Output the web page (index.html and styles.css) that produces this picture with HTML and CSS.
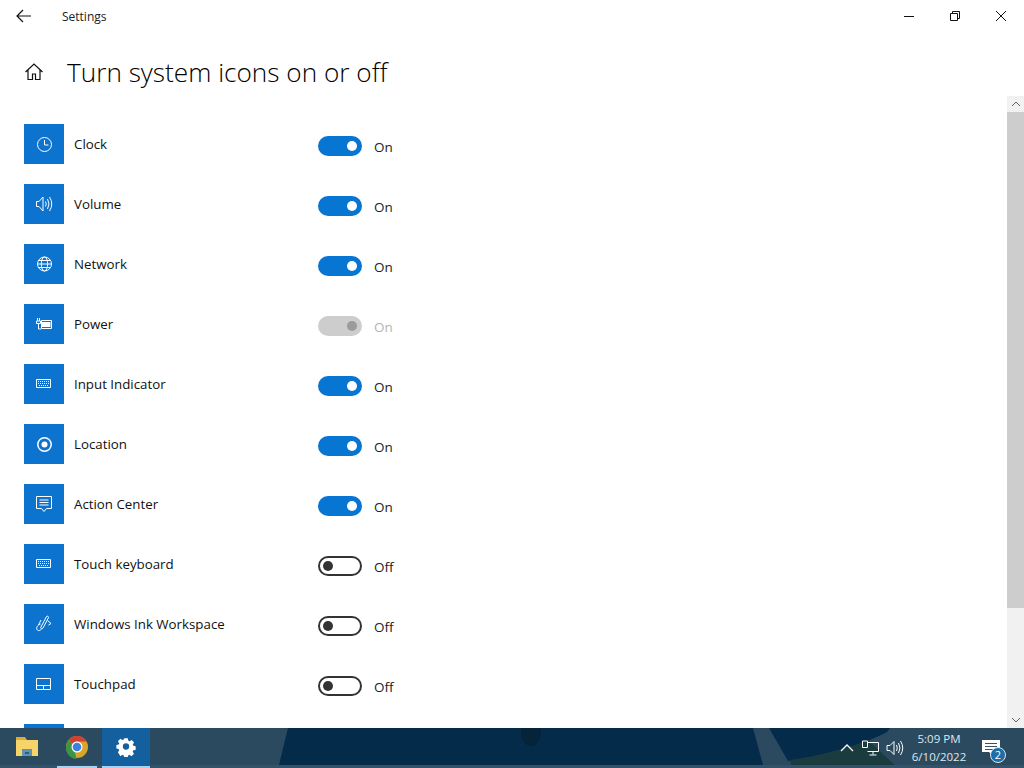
FILE: index.html
```html
<!DOCTYPE html>
<html lang="en">
<head>
<meta charset="utf-8">
<title>Settings</title>
<link rel="stylesheet" href="styles.css">
</head>
<body>
<div class="window">
  <header class="titlebar">
    <svg class="back" width="16" height="14" viewBox="0 0 16 14"><path d="M7 1 1 7l6 6M1 7h14"/></svg>
    <span class="app-name">Settings</span>
    <div class="win-controls">
      <svg width="10" height="10" viewBox="0 0 10 10"><path d="M0 5.500h10"/></svg>
      <svg width="10" height="10" viewBox="0 0 10 10"><path d="M.5 2.500h7v7h-7zM2.500 2.500v-2h7v7h-2"/></svg>
      <svg width="10" height="10" viewBox="0 0 10 10"><path d="M0 0l10 10M10 0 0 10"/></svg>
    </div>
  </header>
  <div class="page-head">
    <svg class="home" width="20" height="20" viewBox="0 0 20 20"><path d="M1.500 10 10 2l8.500 8M4 8v9.500h4.500v-5.500h3v5.500H16V8"/></svg>
    <h1>Turn system icons on or off</h1>
  </div>
  <div class="body">
    <main class="list">
      <div class="row">
        <span class="tile"><svg width="20" height="20" viewBox="0 0 20 20"><circle cx="10.500" cy="10.500" r="7"/><path d="M10.500 6v5h4"/></svg></span>
        <span class="label">Clock</span>
        <span class="switch on"><i></i></span><span class="state">On</span>
      </div>
      <div class="row">
        <span class="tile"><svg width="20" height="20" viewBox="0 0 20 20"><path d="M2.500 7.500h2.500l4-4.500v14l-4-4.500H2.500zM11.500 7.500q1.500 2.500 0 5M13.500 5q3 5 0 10M15.500 3q4.500 7 0 14"/></svg></span>
        <span class="label">Volume</span>
        <span class="switch on"><i></i></span><span class="state">On</span>
      </div>
      <div class="row">
        <span class="tile"><svg width="20" height="20" viewBox="0 0 20 20"><circle cx="10.500" cy="10" r="7"/><ellipse cx="10.500" cy="10" rx="3.200" ry="7"/><path d="M3.500 10h14M4.500 6.500h12M4.500 13.500h12"/></svg></span>
        <span class="label">Network</span>
        <span class="switch on"><i></i></span><span class="state">On</span>
      </div>
      <div class="row">
        <span class="tile"><svg width="20" height="20" viewBox="0 0 20 20"><path d="M3.500 4v3M5.500 4v3M2.500 7h4v2.500h-4zM4.500 9.500V15h2.500"/><path d="M7.500 6.500h10v8h-10z"/><path class="solid" d="M8 8h8.500v5H8z"/></svg></span>
        <span class="label">Power</span>
        <span class="switch disabled"><i></i></span><span class="state dim">On</span>
      </div>
      <div class="row">
        <span class="tile"><svg width="20" height="20" viewBox="0 0 20 20"><path d="M2.500 5.500h14v8h-14z"/><path class="dots" d="M4 7.500h11M4 9.500h11M5 11.500h9"/></svg></span>
        <span class="label">Input Indicator</span>
        <span class="switch on"><i></i></span><span class="state">On</span>
      </div>
      <div class="row">
        <span class="tile"><svg width="20" height="20" viewBox="0 0 20 20"><circle class="thick" cx="10.500" cy="10.500" r="6.700"/><circle class="fill" cx="10.500" cy="10.500" r="3"/></svg></span>
        <span class="label">Location</span>
        <span class="switch on"><i></i></span><span class="state">On</span>
      </div>
      <div class="row">
        <span class="tile"><svg width="20" height="20" viewBox="0 0 20 20"><path d="M2.500 2.500h15v12h-5l-2.500 3-2.500-3h-5zM5.500 6h9M5.500 8.500h9M5.500 11h9"/></svg></span>
        <span class="label">Action Center</span>
        <span class="switch on"><i></i></span><span class="state">On</span>
      </div>
      <div class="row">
        <span class="tile"><svg width="20" height="20" viewBox="0 0 20 20"><path d="M2.500 5.500h14v8h-14z"/><path class="dots" d="M4 7.500h11M4 9.500h11M5 11.500h9"/></svg></span>
        <span class="label">Touch keyboard</span>
        <span class="switch off"><i></i></span><span class="state">Off</span>
      </div>
      <div class="row">
        <span class="tile"><svg width="20" height="20" viewBox="0 0 20 20"><path d="M12.500 2.500c1-.8 2.300 0 2 1.200L9 14c-.8 1.200-2 .8-2.500-.2zM13.500 6.500l3.500 3-2.500 1.500M7 6l-2.500 5M6.500 10c-3 1-4.500 3.500-3.500 5.500s3.500 1 5-1"/></svg></span>
        <span class="label">Windows Ink Workspace</span>
        <span class="switch off"><i></i></span><span class="state">Off</span>
      </div>
      <div class="row">
        <span class="tile"><svg width="20" height="20" viewBox="0 0 20 20"><path d="M2.500 4.500h14v11h-14zM2.500 11.500h14M9.500 11.500v4"/></svg></span>
        <span class="label">Touchpad</span>
        <span class="switch off"><i></i></span><span class="state">Off</span>
      </div>
      <div class="row">
        <span class="tile"></span>
      </div>
    </main>
    <aside class="scrollbar">
      <span class="arrow"><svg width="10" height="6" viewBox="0 0 10 6"><path d="M1 5l4-4 4 4"/></svg></span>
      <span class="track"><span class="thumb"></span></span>
      <span class="arrow"><svg width="10" height="6" viewBox="0 0 10 6"><path d="M1 1l4 4 4-4"/></svg></span>
    </aside>
  </div>
</div>
<footer class="taskbar">
  <svg class="wallpaper" width="1024" height="40" viewBox="0 0 1024 40">
    <path fill="#052b4a" d="M288 0h465l10 37H279z"/>
    <ellipse cx="531" cy="4" rx="10" ry="14" fill="#05243a"/>
    <path fill="#052b4a" d="M769 0h121l-3 4c-22 12-65 24-99 29z"/>
    <path fill="#1a3c3f" d="M790 32c30-4 60-12 78-20l30 28H792z"/>
    <path fill="#33536a" d="M0 37h1024v3H0z"/>
  </svg>
  <div class="task-apps">
    <span class="task folder">
      <svg width="24" height="22" viewBox="0 0 24 22"><path fill="#d9a93b" d="M1 1h9l2 3h-11z"/><path fill="#f6d468" d="M1 4h22v16H1z"/><path fill="#5f93b3" d="M7 13h10v7H7z"/><path fill="#2f5f7f" d="M10 16h4v2h-4z"/></svg>
    </span>
    <span class="task chrome">
      <svg width="24" height="24" viewBox="0 0 24 24"><circle cx="12" cy="12" r="11" fill="#d8a52a"/><path fill="#d13f35" d="M12 1a11 11 0 0 1 9.500 5.500H12a5.500 5.500 0 0 0-5 3L3.800 4.600A11 11 0 0 1 12 1z"/><path fill="#3d9447" d="M1 12a11 11 0 0 1 2.800-7.400L9 13l2.500 10.900A11 11 0 0 1 1 12z"/><circle cx="12" cy="12" r="5.500" fill="#fff"/><circle cx="12" cy="12" r="4.300" fill="#3f7fe0"/></svg>
    </span>
    <span class="task settings">
      <svg width="20" height="20" viewBox="0 0 20 20"><path fill="#fff" fill-rule="evenodd" d="M8 .8h4l.5 2.600 1.500.7 2.300-1.400 2.700 2.900-1.500 2.200.6 1.500 2.600.5v4l-2.600.5-.7 1.500 1.500 2.200-2.800 2.800-2.200-1.500-1.500.7-.4 2.500H8l-.5-2.600-1.500-.6-2.200 1.500L1 16.500l1.500-2.200-.7-1.500L-.7 12.300V8.300l2.600-.5.600-1.500L1 4.100l2.800-2.800L6 2.800l1.500-.6zM10 6.500a3.500 3.500 0 1 0 0 7 3.500 3.500 0 0 0 0-7z" transform="translate(1 .5) scale(.9)"/></svg>
    </span>
  </div>
  <div class="tray">
    <svg class="t-chev" width="14" height="8" viewBox="0 0 14 8"><path d="M1 7l6-6 6 6"/></svg>
    <svg class="t-net" width="18" height="16" viewBox="0 0 18 16"><path d="M5.500 2.500h11v9h-11M11 11.500v3M7.500 15h7M.5 1h5v6.500h-5z"/></svg>
    <svg class="t-vol" width="18" height="16" viewBox="0 0 18 16"><path d="M1 5.500h3l4-4v13l-4-4H1zM10.500 5q1.500 3 0 6M12.500 3q3 5 0 10M14.500 1q4.500 7 0 14"/></svg>
    <div class="clock"><span>5:09 PM</span><span>6/10/2022</span></div>
    <span class="notify">
      <svg width="18" height="16" viewBox="0 0 18 16"><path fill="#fff" d="M0 0h18v12h-5l-3 3-3-3H0z"/><path stroke="#33536a" d="M3 3.500h12M3 6.500h12M3 9.500h8"/></svg>
      <b class="badge">2</b>
    </span>
  </div>
</footer>
</body>
</html>
```
FILE: styles.css
```css
* { box-sizing: border-box; }
html, body { margin: 0; height: 100%; }
body {
  width: 1024px;
  height: 768px;
  overflow: hidden;
  display: flex;
  flex-direction: column;
  background: #fff;
  color: #111;
  font-family: "Open Sans", "Noto Sans", sans-serif;
}
svg { display: block; fill: none; stroke: currentColor; stroke-width: 1; }

.window { flex: 1; min-height: 0; display: flex; flex-direction: column; }

.titlebar { height: 32px; flex: none; display: flex; align-items: center; padding-left: 16px; }
.back { stroke-width: 1.200; color: #111; }
.app-name { margin-left: 30px; font-size: 12px; color: #222; }
.win-controls { margin-left: auto; display: flex; gap: 36px; padding-right: 18px; }

.page-head { height: 64px; flex: none; display: flex; align-items: center; padding: 16px 0 0 24px; }
.home { stroke-width: 1.200; }
h1 { margin: 0 0 0 23px; font-size: 26.200px; font-weight: 300; line-height: 36px; color: #000; }

.body { flex: 1; min-height: 0; display: flex; }
.list { flex: 1; min-width: 0; overflow: hidden; padding: 28px 0 0 24px; }

.row { height: 60px; display: flex; align-items: flex-start; }
.tile { width: 40px; height: 40px; flex: none; background: #0c73cf; color: #fff; display: flex; align-items: center; justify-content: center; }
.tile .solid { fill: #fff; stroke: none; }
.tile .fill { fill: #fff; stroke: none; }
.tile .thick { stroke-width: 1.500; }
.tile .dots { stroke-dasharray: 1 1; }
.label { width: 244px; margin-left: 10px; font-size: 13.300px; line-height: 40px; color: #111; }

.switch { width: 44px; height: 20px; margin-top: 12px; flex: none; border-radius: 10px; display: flex; align-items: center; padding: 0 5px; }
.switch i { width: 10px; height: 10px; border-radius: 50%; }
.switch.on { background: #0776d3; justify-content: flex-end; }
.switch.on i { background: #fff; }
.switch.disabled { background: #cdcdcd; justify-content: flex-end; }
.switch.disabled i { background: #9b9b9b; }
.switch.off { border: 2px solid #333; padding: 0 3px; }
.switch.off i { background: #333; }
.state { margin-left: 12px; font-size: 13.500px; line-height: 20px; margin-top: 13px; color: #222; }
.state.dim { color: #b5b5b5; }

.scrollbar { width: 17px; flex: none; background: #f1f1f1; display: flex; flex-direction: column; }
.arrow { height: 16px; flex: none; display: flex; align-items: center; justify-content: center; color: #606060; }
.track { flex: 1; display: block; }
.thumb { display: block; height: 496px; background: #cdcdcd; }

.taskbar { position: relative; height: 40px; flex: none; display: flex; justify-content: space-between; background: #2b4a60; color: #fff; overflow: hidden; }
.wallpaper { position: absolute; left: 0; top: 0; stroke: none; }
.task-apps, .tray { position: relative; display: flex; align-items: stretch; }
.task { display: flex; align-items: center; justify-content: center; border-bottom: 2px solid transparent; }
.task svg { stroke: none; }
.folder { width: 55px; padding-right: 1px; }
.chrome { width: 40px; border-bottom-color: #a9d2f2; margin-left: 2px; margin-right: 5px; }
.settings { width: 48px; background: #145f9e; border-bottom-color: #a9d2f2; }
.tray { align-items: center; padding-right: 24px; }
.t-chev { stroke-width: 1.300; }
.t-net { margin-left: 8px; }
.t-vol { margin-left: 6px; }
.clock { width: 66px; margin-left: 2px; display: flex; flex-direction: column; align-items: center; font-size: 11.500px; line-height: 18px; color: #dfe8ee; }
.notify { position: relative; margin-left: 10px; }
.notify svg { stroke: none; }
.badge { position: absolute; left: 8px; top: 7px; width: 16px; height: 16px; border-radius: 50%; background: #1c6ea8; border: 1px solid #d9e6ef; font-size: 11px; line-height: 14px; font-weight: 400; text-align: center; }
```
